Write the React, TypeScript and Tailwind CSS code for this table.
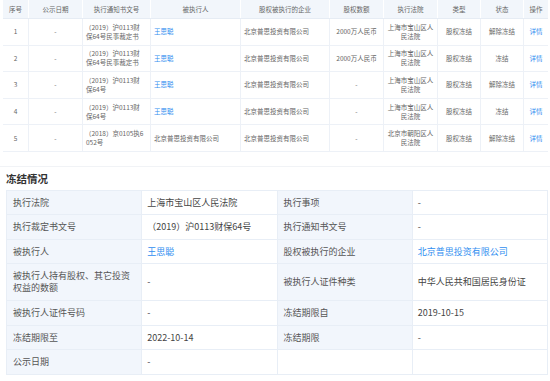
import React from "react";

const font = { fontFamily: '"Noto Sans CJK SC", "Noto Sans", sans-serif' };

type Row = {
  no: string;
  doc: string[];
  person: string;
  personLink: boolean;
  amount: string;
  court: string[];
  status: string;
};

const rows: Row[] = [
  { no: "1", doc: ["（2019）沪0113财", "保64号民事裁定书"], person: "王思聪", personLink: true, amount: "2000万人民币", court: ["上海市宝山区人", "民法院"], status: "解除冻结" },
  { no: "2", doc: ["（2019）沪0113财", "保64号民事裁定书"], person: "王思聪", personLink: true, amount: "2000万人民币", court: ["上海市宝山区人", "民法院"], status: "冻结" },
  { no: "3", doc: ["（2019）沪0113财", "保64号"], person: "王思聪", personLink: true, amount: "-", court: ["上海市宝山区人", "民法院"], status: "解除冻结" },
  { no: "4", doc: ["（2019）沪0113财", "保64号"], person: "王思聪", personLink: true, amount: "-", court: ["上海市宝山区人", "民法院"], status: "冻结" },
  { no: "5", doc: ["（2018）京0105执6", "052号"], person: "北京普思投资有限公司", personLink: false, amount: "-", court: ["北京市朝阳区人", "民法院"], status: "解除冻结" },
];

const headers = ["序号", "公示日期", "执行通知书文号", "被执行人", "股权被执行的企业", "股权数额", "执行法院", "类型", "状态", "操作"];

const gridCols = "grid grid-cols-[26px_54px_68px_90px_89px_54px_54px_43px_43px_24px]";

const Cell = ({ children, className = "" }: { children?: React.ReactNode; className?: string }) => (
  <div className={`flex items-center border-r border-[#edf1f7] last:border-r-0 ${className}`}>{children}</div>
);

const detail: { label: React.ReactNode; value: React.ReactNode; tall?: boolean; blank?: boolean }[][] = [
  [
    { label: "执行法院", value: "上海市宝山区人民法院" },
    { label: "执行事项", value: "-" },
  ],
  [
    { label: "执行裁定书文号", value: "（2019）沪0113财保64号" },
    { label: "执行通知书文号", value: "-" },
  ],
  [
    { label: "被执行人", value: <span className="text-[#2f8ef0]">王思聪</span> },
    { label: "股权被执行的企业", value: <span className="text-[#2f8ef0]">北京普思投资有限公司</span> },
  ],
  [
    { label: <>被执行人持有股权、其它投资<br />权益的数额</>, value: "-", tall: true },
    { label: "被执行人证件种类", value: "中华人民共和国居民身份证", tall: true },
  ],
  [
    { label: "被执行人证件号码", value: "-" },
    { label: "冻结期限自", value: "2019-10-15" },
  ],
  [
    { label: "冻结期限至", value: "2022-10-14" },
    { label: "冻结期限", value: "-" },
  ],
  [
    { label: "公示日期", value: "-" },
    { label: "", value: "", blank: true },
  ],
];

export default function App() {
  return (
    <div className="w-[550px] h-[381px] overflow-hidden bg-white" style={font}>
      {/* top list */}
      <div className="pl-[3px] pr-[2px] text-[6.5px] leading-[9px] text-[#666]">
        <div className={`${gridCols} h-[19px] bg-[#f2f6fb] border-b border-[#e6ecf4]`}>
          {headers.map((h) => (
            <div key={h} className="flex items-center justify-center border-r border-white last:border-r-0">
              {h}
            </div>
          ))}
        </div>
        {rows.map((r) => (
          <div key={r.no} className={`${gridCols} h-[26.6px] border-b border-[#edf1f7]`}>
            <Cell className="justify-center">{r.no}</Cell>
            <Cell className="justify-center">-</Cell>
            <Cell className="pl-[2px]">
              <div className="whitespace-nowrap">
                {r.doc.map((d, i) => (
                  <div key={i} className={i === 1 ? "pl-[1px]" : ""}>{d}</div>
                ))}
              </div>
            </Cell>
            <Cell className={`pl-[3px] ${r.personLink ? "text-[#2f8ef0]" : ""}`}>{r.person}</Cell>
            <Cell className="pl-[3px]">北京普思投资有限公司</Cell>
            <Cell className="justify-center whitespace-nowrap">{r.amount}</Cell>
            <Cell className="justify-center">
              <div className="text-center whitespace-nowrap">
                {r.court.map((c, i) => (
                  <div key={i}>{c}</div>
                ))}
              </div>
            </Cell>
            <Cell className="justify-center">股权冻结</Cell>
            <Cell className="justify-center">{r.status}</Cell>
            <Cell className="justify-center text-[#2f8ef0]">详情</Cell>
          </div>
        ))}
      </div>

      <div className="mt-[14px] border-t border-[#f1f3f6]" />

      {/* freeze details */}
      <div className="pl-[6px] pr-[2px]">
        <h2 className="h-[23px] flex items-center text-[10.5px] font-bold text-[#333]">冻结情况</h2>
        <div className="border-t border-l border-[#e8eef6] text-[9px] leading-[12px]">
          {detail.map((row, ri) => (
            <div
              key={ri}
              className={`grid grid-cols-4 border-b border-[#e8eef6] ${row[0].tall ? "h-[37px]" : "h-[24.5px]"}`}
            >
              {row.map((c, ci) => (
                <React.Fragment key={ci}>
                  <div
                    className={`flex items-center pl-[6px] text-[#555] border-r border-[#e8eef6] ${c.blank ? "bg-white" : "bg-[#f2f6fc]"}`}
                  >
                    <div>{c.label}</div>
                  </div>
                  <div className="flex items-center pl-[5px] text-[#444] border-r border-[#e8eef6]">{c.value}</div>
                </React.Fragment>
              ))}
            </div>
          ))}
        </div>
      </div>
    </div>
  );
}
